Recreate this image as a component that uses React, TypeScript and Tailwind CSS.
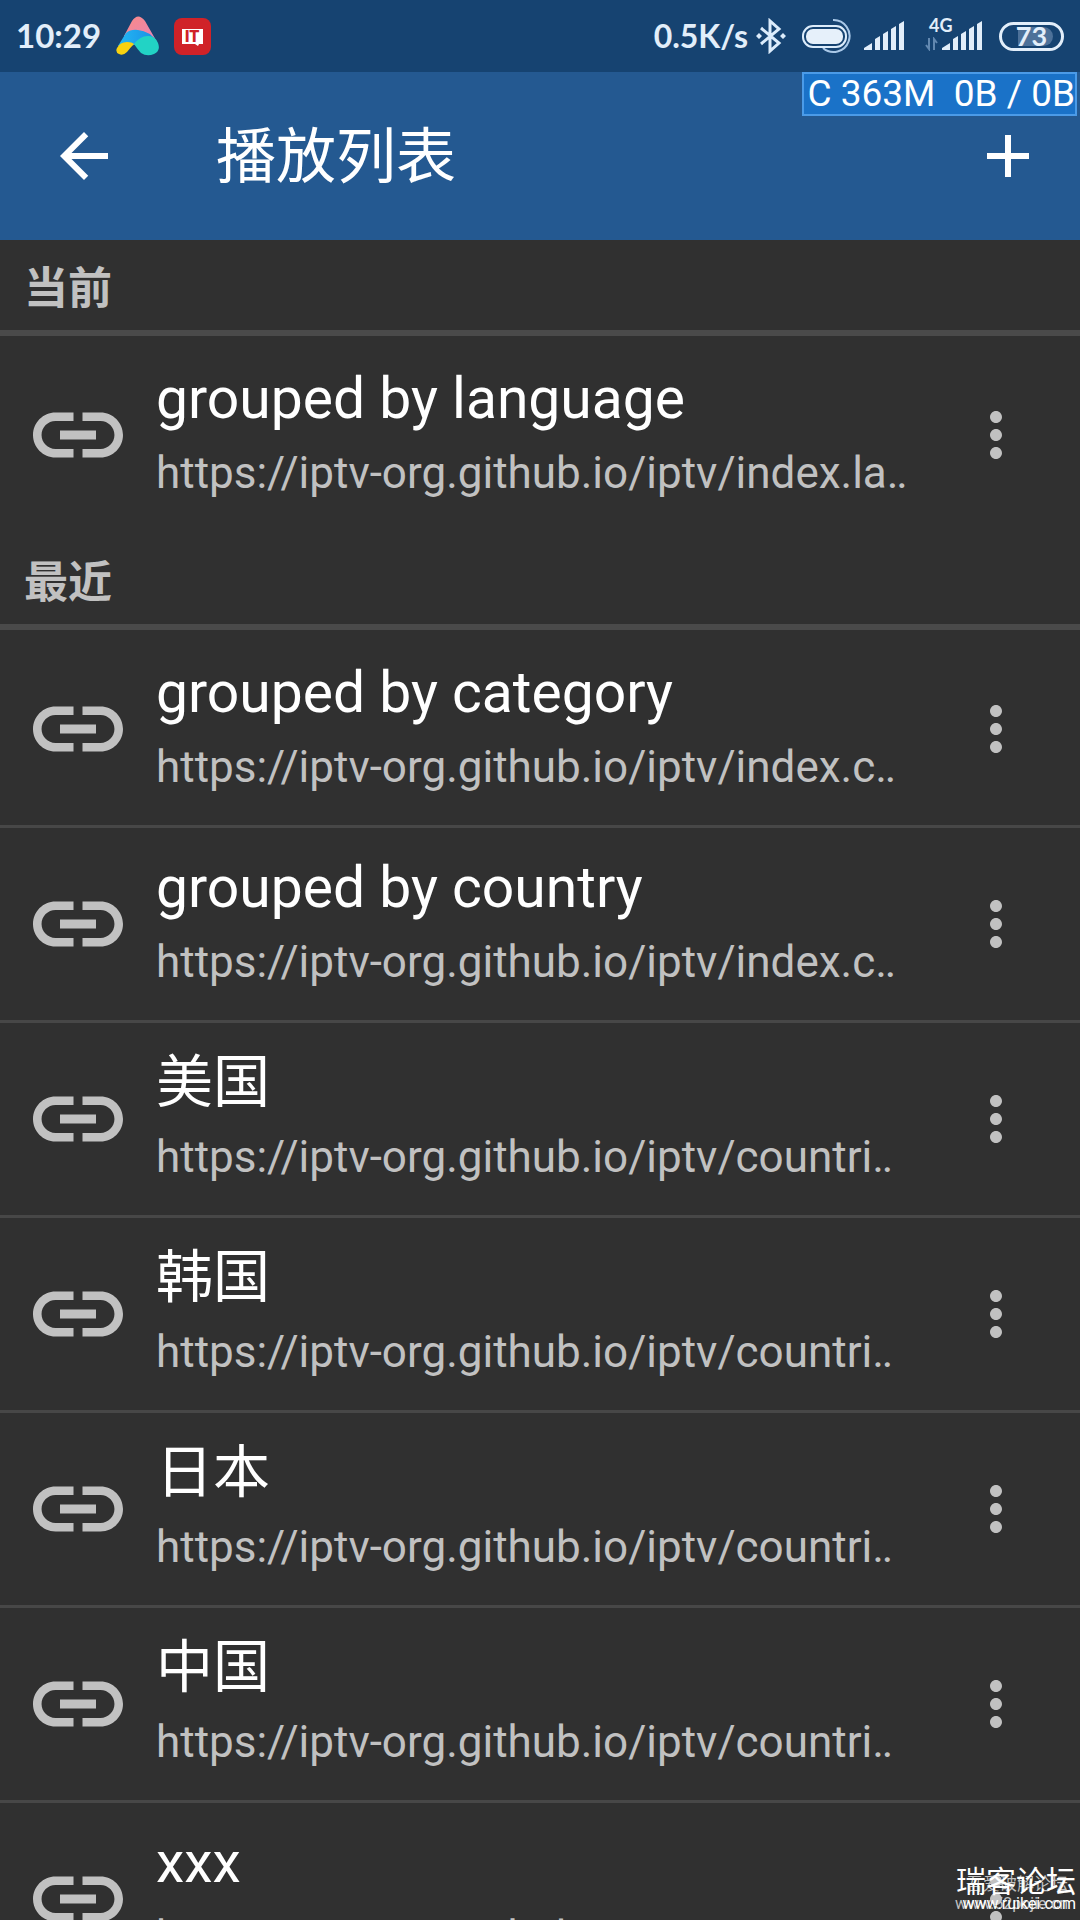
import { MdAdd, MdArrowBack, MdLink, MdMoreVert } from 'react-icons/md';

type Playlist = { id: number; name: string; url: string };

const current: Playlist[] = [
  { id: 1, name: 'grouped by language', url: 'https://iptv-org.github.io/iptv/index.la‥' },
];

const recent: Playlist[] = [
  { id: 2, name: 'grouped by category', url: 'https://iptv-org.github.io/iptv/index.c‥' },
  { id: 3, name: 'grouped by country', url: 'https://iptv-org.github.io/iptv/index.c‥' },
  { id: 4, name: '美国', url: 'https://iptv-org.github.io/iptv/countri‥' },
  { id: 5, name: '韩国', url: 'https://iptv-org.github.io/iptv/countri‥' },
  { id: 6, name: '日本', url: 'https://iptv-org.github.io/iptv/countri‥' },
  { id: 7, name: '中国', url: 'https://iptv-org.github.io/iptv/countri‥' },
  { id: 8, name: 'xxx', url: 'https://iptv-org.github.io/iptv/countri‥' },
];

function AssistantLogo() {
  return (
    <svg width="44" height="40" viewBox="0 0 44 40" aria-hidden="true">
      <defs>
        <linearGradient id="logo-pink" x1="0" y1="0" x2="1" y2="1">
          <stop offset="0" stopColor="#f98a86" />
          <stop offset="1" stopColor="#e884b8" />
        </linearGradient>
        <linearGradient id="logo-blue" x1="0" y1="0" x2="1" y2="0">
          <stop offset="0" stopColor="#22b8f4" />
          <stop offset="1" stopColor="#1b8ee4" />
        </linearGradient>
      </defs>
      <path d="M8 20L16 5Q22 -4 29 5L41 26L22 20Z" fill="url(#logo-pink)" />
      <path d="M2 30L10 17Q15 13 22 14Q34 15 41 26L34 28L18 29L12 30Z" fill="url(#logo-blue)" />
      <path d="M18 28Q25 19 33 20Q39 20 42 27Q45 35 38 38Q31 41 25 37Q22 34 18 28Z" fill="#22d3c5" />
      <path d="M1 32Q4 26 11 26Q16 26 18 28Q14 32 11 36Q7 40 3 38Q-1 36 1 32Z" fill="#f8d210" />
    </svg>
  );
}

function ItLogo() {
  return (
    <svg width="37" height="37" viewBox="0 0 37 37" aria-hidden="true">
      <rect width="37" height="37" rx="8" fill="#d02228" />
      <path d="M8 11H29V26H25L24 28L21 26H8Z" fill="#fff" />
      <text x="18" y="24" textAnchor="middle" fontSize="16" fontWeight="900" fontFamily="Roboto, sans-serif" fill="#d02228">
        IT
      </text>
    </svg>
  );
}

function BluetoothIcon() {
  return (
    <svg width="30" height="36" viewBox="0 0 30 36" fill="none" stroke="#dcecfb" strokeWidth="3" aria-hidden="true">
      <path d="M5 10L23 25L14 33V3L23 11L5 26" />
      <path d="M3 15L6 18L3 21L0 18ZM27 15L30 18L27 21L24 18Z" fill="#dcecfb" stroke="none" />
    </svg>
  );
}

function DeviceIcon() {
  return (
    <svg width="50" height="36" viewBox="0 0 50 36" fill="none" aria-hidden="true">
      <path d="M31 2A16 16 0 1 1 21 30" stroke="#a9c8e8" strokeWidth="2" />
      <rect x="1" y="8" width="43" height="21" rx="10" fill="#164371" stroke="#dcecfb" strokeWidth="2" />
      <rect x="4" y="11" width="37" height="15" rx="7" fill="#e6f0fa" />
    </svg>
  );
}

function SignalBars() {
  return (
    <svg width="41" height="30" viewBox="0 0 41 30" fill="#e2eefa" aria-hidden="true">
      <path d="M0 29V27L8 22V29ZM11 18L16 15V29H11ZM19 13L24 10V29H19ZM27 8L32 5V29H27ZM35 3L40 0V29H35Z" />
    </svg>
  );
}

function DataArrows() {
  return (
    <svg width="13" height="14" viewBox="0 0 13 14" fill="none" stroke="#6288b0" strokeWidth="2" aria-hidden="true">
      <path d="M4 1V12L1 8M9 13V2L12 6" />
    </svg>
  );
}

function StatusBar() {
  return (
    <div className="flex h-[72px] items-center justify-between bg-[#164371] px-4 font-[Lato,sans-serif] text-[#e2eefa]">
      <div className="flex items-center">
        <span className="w-[100px] text-[33px] font-bold">10:29</span>
        <AssistantLogo />
        <span className="ml-3.5">
          <ItLogo />
        </span>
      </div>
      <div className="flex items-center">
        <span className="text-[32px] font-bold">0.5K/s</span>
        <span className="ml-2">
          <BluetoothIcon />
        </span>
        <span className="ml-4">
          <DeviceIcon />
        </span>
        <span className="ml-3">
          <SignalBars />
        </span>
        <div className="relative ml-5 flex items-end gap-1">
          <span className="absolute -top-1 left-1 text-lg leading-4 font-bold">4G</span>
          <DataArrows />
          <SignalBars />
        </div>
        <div className="relative ml-4 flex h-[29px] w-[65px] items-center justify-center rounded-full border-3 border-[#e2eefa] text-[27px] font-bold">
          <span className="absolute inset-y-[2px] right-2 left-4 rounded-r-full bg-[#4d7199]" />
          <span className="relative">73</span>
        </div>
      </div>
    </div>
  );
}

function SectionTitle({ children }: { children: string }) {
  return (
    <h2 className="flex h-24 items-center border-b-6 border-[#4a4a4a] px-6 pt-2 text-[44px] font-bold text-[#c1c1c1]">
      {children}
    </h2>
  );
}

function PlaylistRow({ item }: { item: Playlist }) {
  return (
    <li className="box-content flex h-48 items-center">
      <MdLink className="ml-6 size-[108px] shrink-0 text-[#c1c1c1]" />
      <a href="#" className="ml-6 min-w-0 flex-1">
        <span className="block truncate text-[57px] leading-[76px] text-white">{item.name}</span>
        <span className="block truncate text-[44px] leading-[72px] text-[#c1c1c1]">{item.url}</span>
      </a>
      <button type="button" aria-label="更多" className="mr-12 shrink-0 text-[#c1c1c1]">
        <MdMoreVert className="size-[72px]" />
      </button>
    </li>
  );
}

function PlaylistList({ items }: { items: Playlist[] }) {
  return (
    <ul className="divide-y-3 divide-[#474747] py-[3px]">
      {items.map((item) => (
        <PlaylistRow key={item.id} item={item} />
      ))}
    </ul>
  );
}

export default function App() {
  return (
    <div className="relative h-screen overflow-hidden bg-[#303030] font-[Roboto,'Noto_Sans_CJK_SC',sans-serif]">
      <StatusBar />
      <header className="relative flex h-[168px] items-center bg-[#245991] pl-12 pr-9 text-white">
        <button type="button" aria-label="返回">
          <MdArrowBack className="size-[72px]" />
        </button>
        <h1 className="ml-24 flex-1 pt-1 text-[60px]">播放列表</h1>
        <button type="button" aria-label="添加">
          <MdAdd className="size-[72px]" />
        </button>
        <div className="absolute top-0 right-[3px] border-2 border-[#4b9be8] bg-[#1a72c8] pl-[3px] text-[37px] leading-10 whitespace-pre">
          C 363M  0B / 0B
        </div>
      </header>

      <main>
        <SectionTitle>当前</SectionTitle>
        <PlaylistList items={current} />
        <SectionTitle>最近</SectionTitle>
        <PlaylistList items={recent} />
      </main>

      {/* forum watermarks, stamped one over the other */}
      <div className="absolute right-3 bottom-2 text-right text-[#c1c1c1]">
        <p className="text-[17px] leading-6">吾爱破解论坛</p>
        <p className="text-[16px] leading-4">www.52pojie.cn</p>
      </div>
      <div className="absolute right-1 bottom-2 text-right text-white">
        <p className="text-[30px] leading-7">瑞客论坛</p>
        <p className="text-[16px] leading-4">www.ruikei.com</p>
      </div>
    </div>
  );
}
